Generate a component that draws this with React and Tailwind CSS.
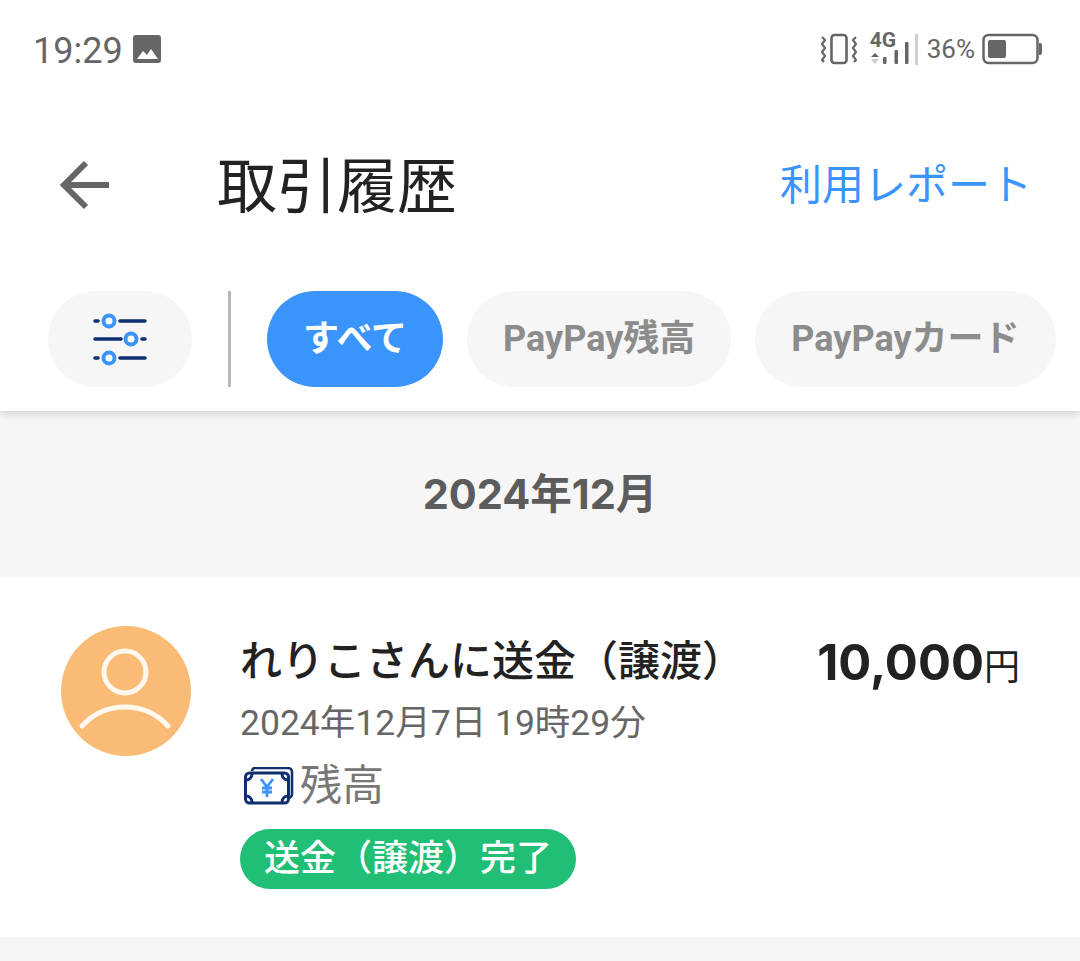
import React from "react";

const FONT = "font-['Roboto','Noto_Sans_CJK_JP',sans-serif]";

const VibrateIcon = () => (
	<svg width="36" height="32" viewBox="0 0 36 32" fill="none" stroke="#666">
		<rect x="10.5" y="2" width="15" height="28" rx="3" strokeWidth="2.6" />
		<path d="M1 4l3 3-3 4 3 4-3 4 3 4-3 4 2 2" strokeWidth="2.2" />
		<path d="M35 4l-3 3 3 4-3 4 3 4-3 4 3 4-2 2" strokeWidth="2.2" />
	</svg>
);

const SignalIcon = () => (
	<div className="relative w-[42px] h-[32px]">
		<span className="absolute left-0 -top-[5px] text-[#666] text-[21px] font-bold leading-[24px]">4G</span>
		<svg width="42" height="32" viewBox="0 0 42 32" fill="#666" className="absolute left-0 top-0">
			<path d="M1 24l4-4 4 4z" />
			<path d="M1 26l4 5 4-5z" fill="#ccc" />
			<rect x="13" y="24" width="3.5" height="7" rx="1" />
			<rect x="24.5" y="17" width="3.5" height="14" rx="1" />
			<rect x="35" y="9" width="3.5" height="22" rx="1" />
		</svg>
	</div>
);

const BatteryIcon = () => (
	<svg width="60" height="32" viewBox="0 0 60 32" fill="none">
		<rect x="1.5" y="2" width="54" height="28" rx="5" stroke="#666" strokeWidth="2.5" />
		<rect x="6" y="7" width="18" height="18" rx="2" fill="#666" />
		<path d="M57 10h1a2 2 0 0 1 2 2v8a2 2 0 0 1-2 2h-1z" fill="#666" />
	</svg>
);

const PictureIcon = () => (
	<svg width="28" height="28" viewBox="0 0 28 28">
		<rect width="28" height="28" rx="3" fill="#666" />
		<path d="M4 24l6-8 4 4 4-6 7 10z" fill="#fff" />
	</svg>
);

const BackIcon = () => (
	<svg width="50" height="50" viewBox="0 0 50 50" fill="none" stroke="#666" strokeWidth="6" className="shrink-0">
		<path d="M50 25H5M27 3L5 25l22 22" />
	</svg>
);

const FilterIcon = () => (
	<svg width="56" height="56" viewBox="0 0 56 56" fill="none" strokeLinecap="round">
		<g stroke="#0f2f6e" strokeWidth="3.6">
			<path d="M3 10h3M28 10h25M3 28h26M50 28h3M3 47h3M28 47h25" />
		</g>
		<g stroke="#3a94fb" strokeWidth="4" fill="#fff">
			<circle cx="17" cy="10" r="5.5" />
			<circle cx="39" cy="28" r="5.5" />
			<circle cx="17" cy="47" r="5.5" />
		</g>
	</svg>
);

const UserAvatar = () => (
	<div className="w-[130px] h-[130px] rounded-full bg-[#fabb76] flex items-center justify-center shrink-0">
		<svg width="130" height="130" viewBox="0 0 130 130" fill="none" stroke="#fff8ee" strokeWidth="5" strokeLinecap="round">
			<circle cx="64" cy="46" r="21" />
			<path d="M21 100c12-13 28-19 43-19s31 6 43 19" />
		</svg>
	</div>
);

const MoneyIcon = () => (
	<svg width="50" height="38" viewBox="0 0 50 38" fill="none">
		<path d="M8 4a3 3 0 0 1 3-3h33a4 4 0 0 1 4 4v22a4 4 0 0 1-4 4" stroke="#0f2f6e" strokeWidth="2.6" />
		<rect x="1.5" y="6" width="43" height="30" rx="4" fill="#fff" stroke="#0f2f6e" strokeWidth="3" />
		<path d="M2 13a6 6 0 0 0 6-6M44 13a6 6 0 0 1-6-6M2 29a6 6 0 0 1 6 6M44 29a6 6 0 0 0-6 6" stroke="#0f2f6e" strokeWidth="3" />
		<path d="M17 12l6 8 6-8M23 20v10M18 21h10M18 25h10" stroke="#3a94fb" strokeWidth="2.8" />
	</svg>
);

const tabs = ["PayPay残高", "PayPayカード"];

const App = () => {
	return (
		<div className={`${FONT} w-[1080px] h-[961px] overflow-hidden bg-[#f6f6f6]`}>
			<div className="bg-white shadow-[0_2px_10px_rgba(0,0,0,0.18)] relative h-[411px]">
				{/* status bar */}
				<div className="flex items-center justify-between h-[98px] pl-[33px] pr-[38px]">
					<div className="flex items-center gap-[10px] text-[#666] text-[36px]">
						<span className="mt-[3px]">19:29</span>
						<PictureIcon />
					</div>
					<div className="flex items-center">
						<VibrateIcon />
						<div className="w-[13px]" />
						<SignalIcon />
						<div className="w-[3px] h-[31px] bg-[#d0d0d0] ml-[3px] mr-[9px]" />
						<span className="text-[#666] text-[26px] mr-[7px]">36%</span>
						<BatteryIcon />
					</div>
				</div>

				{/* title row */}
				<div className="flex items-center h-[174px] pl-[59px] pr-[50px]">
					<BackIcon />
					<h1 className="ml-[108px] text-[#222] text-[60px] font-normal leading-none mt-[6px]">取引履歴</h1>
					<span className="ml-auto -mr-[2px] text-[#3a94fb] text-[42px]">利用レポート</span>
				</div>

				{/* filter tabs */}
				<div className="flex items-center pt-[19px] pl-[48px] overflow-hidden">
					<div className="w-[144px] h-[96px] rounded-full bg-[#f6f6f6] flex items-center justify-center shrink-0">
						<FilterIcon />
					</div>
					<div className="w-[3px] h-[96px] bg-[#b8b8b8] ml-[36px] mr-[36px] shrink-0" />
					<div className="w-[176px] h-[96px] rounded-full bg-[#3a94fb] text-white text-[36px] font-bold flex items-center justify-center shrink-0">
						すべて
					</div>
					{tabs.map((tab) => (
						<div
							key={tab}
							className="ml-[24px] px-[36px] h-[96px] rounded-full bg-[#f6f6f6] text-[#8c8c8c] text-[36px] font-bold flex items-center justify-center shrink-0"
						>
							{tab}
						</div>
					))}
					<div className="ml-[24px] w-[100px] h-[96px] rounded-full bg-[#f6f6f6] shrink-0" />
				</div>
			</div>

			{/* month heading */}
			<div className="h-[166px] flex items-center justify-center text-[#5c5c5c] text-[41.5px] font-bold font-['Inter','Noto_Sans_CJK_JP',sans-serif]">
				2024年12月
			</div>

			{/* transaction */}
			<div className="bg-white h-[360px] flex items-start pt-[49px] pl-[61px] pr-[60px]">
				<UserAvatar />
				<div className="ml-[49px] flex-1 min-w-0">
					<div className="text-[#222] text-[42px] font-medium leading-[66px] whitespace-nowrap mt-[3px]">れりこさんに送金（譲渡）</div>
					<div className="text-[#666] text-[35.5px] leading-[48px] mt-[4px]">2024年12月7日 19時29分</div>
					<div className="flex items-center text-[#777] text-[42px] leading-[60px] mt-[9px]">
						<span className="ml-[4px]">
							<MoneyIcon />
						</span>
						<span className="ml-[6px]">残高</span>
					</div>
					<div className="mt-[13px] inline-flex items-center h-[60px] px-[24px] rounded-full bg-[#20bf75] text-white text-[36px] font-medium">
						送金（譲渡）完了
					</div>
				</div>
				<div className="flex items-baseline text-[#222]">
					<span className="font-['Inter',sans-serif] text-[49px] font-bold leading-[74px]">10,000</span>
					<span className="text-[36px]">円</span>
				</div>
			</div>
		</div>
	);
};

export default App;
